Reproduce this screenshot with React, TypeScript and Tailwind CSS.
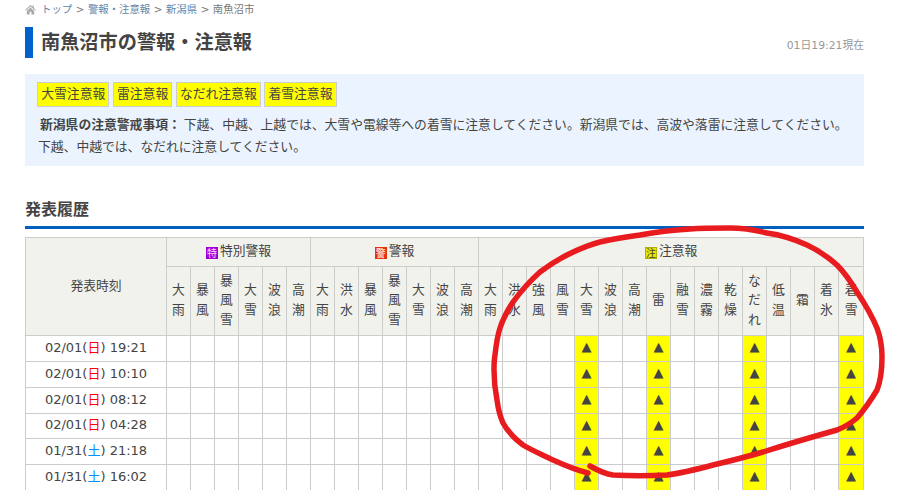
const tokubetsu = ["大雨", "暴風", "暴風雪", "大雪", "波浪", "高潮"];
const keiho = ["大雨", "洪水", "暴風", "暴風雪", "大雪", "波浪", "高潮"];
const chui = ["大雨", "洪水", "強風", "風雪", "大雪", "波浪", "高潮", "雷", "融雪", "濃霧", "乾燥", "なだれ", "低温", "霜", "着氷", "着雪"];
const heads = [...tokubetsu, ...keiho, ...chui];
const total = heads.length;
const activeCols = new Set([17, 20, 24, 28]);

const rows = [
  { date: "02/01", day: "日", time: "19:21", h: "h-[26px]" },
  { date: "02/01", day: "日", time: "10:10", h: "h-[26px]" },
  { date: "02/01", day: "日", time: "08:12", h: "h-[26px]" },
  { date: "02/01", day: "日", time: "04:28", h: "h-[25px]" },
  { date: "01/31", day: "土", time: "21:18", h: "h-[26px]" },
  { date: "01/31", day: "土", time: "16:02", h: "h-[26px]" },
];

const badges = ["大雪注意報", "雷注意報", "なだれ注意報", "着雪注意報"];

function Crumb({ children }: { children: React.ReactNode }) {
  return <span className="text-[#6486a8]">{children}</span>;
}

function Sep() {
  return <span className="mx-[3.5px] text-[#777]">&gt;</span>;
}

function Mark({ label, cls }: { label: string; cls: string }) {
  return (
    <span className={`mr-[2px] inline-flex h-[12px] w-[12px] items-center justify-center align-[-2px] font-['Noto_Sans_CJK_JP',sans-serif] text-[10px] leading-none ${cls}`}>
      {label}
    </span>
  );
}

export default function App() {
  return (
    <div className="relative h-[490px] w-[910px] overflow-hidden bg-white pl-[25px] pr-[46px] font-['DejaVu_Sans','Noto_Sans_CJK_JP',sans-serif] text-[12.8px] text-[#444]">
      <nav className="flex h-[17px] items-center pt-[1px] text-[10.4px] leading-none">
        <svg viewBox="0 0 12 11" className="mr-[5px] h-[11px] w-[11px]" fill="#aaa">
          <path d="M6 0.5 0 6l.8.8L6 2.2l5.2 4.6.8-.8L9.6 3.8V1H8.2v1.6L6 .5Z" />
          <path d="M2 7 6 3.4 10 7v4H7V8H5v3H2V7Z" />
        </svg>
        <Crumb>トップ</Crumb>
        <Sep />
        <Crumb>警報・注意報</Crumb>
        <Sep />
        <Crumb>新潟県</Crumb>
        <Sep />
        <span className="text-[#777]">南魚沼市</span>
      </nav>

      <header className="mt-[10px] flex h-[31px] items-center justify-between">
        <h1 className="border-l-[8px] border-[#0060cc] pl-[8px] text-[19.2px] leading-[31px] font-bold text-[#444]">
          南魚沼市の警報・注意報
        </h1>
        <span className="mt-[7px] text-[10.8px] text-[#999]">01日19:21現在</span>
      </header>

      <section className="mt-[16px] h-[92px] bg-[#ebf4fe] px-[12px] pt-[8px]">
        <div className="flex gap-[3.25px]">
          {badges.map((b) => (
            <span key={b} className="flex h-[25px] items-center border border-[#ccc] bg-[#ffff00] px-[3.25px] leading-none text-[#444]">
              {b}
            </span>
          ))}
        </div>
        <p className="mt-[6px] pl-[1px] leading-[22px] text-[#444] [text-indent:2px]">
          <strong className="mr-[3px] font-['Noto_Sans_CJK_JP',sans-serif] font-bold">新潟県の注意警戒事項：</strong>
          下越、中越、上越では、大雪や電線等への着雪に注意してください。新潟県では、高波や落雷に注意してください。下越、中越では、なだれに注意してください。
        </p>
      </section>

      <h2 className="mt-[33px] box-content h-[27px] border-b-[3px] border-[#0060c0] text-[16px] leading-[22px] font-bold text-[#444]">
        発表履歴
      </h2>

      <table className="mt-[8px] w-[839px] table-fixed border-collapse text-center text-[12.8px] text-[#444]">
        <colgroup>
          <col className="w-[141px]" />
          {heads.map((_, i) => (
            <col key={i} className={i === total - 1 ? "w-[25px]" : "w-[24px]"} />
          ))}
        </colgroup>
        <thead>
          <tr className="h-[29px]">
            <th rowSpan={2} className="border border-[#ccc] bg-[#f2f2ed] pb-[2px] font-normal">発表時刻</th>
            <th colSpan={6} className="border border-[#ccc] bg-[#f2f2ed] pb-[3px] font-normal">
              <Mark label="特" cls="bg-[#a000d8] text-[#ffd8ff]" />特別警報
            </th>
            <th colSpan={7} className="border border-[#ccc] bg-[#f2f2ed] pb-[3px] font-normal">
              <Mark label="警" cls="bg-[#e8300c] text-white" />警報
            </th>
            <th colSpan={16} className="border border-[#ccc] bg-[#f2f2ed] pb-[3px] font-normal">
              <Mark label="注" cls="border border-[#b0b000] bg-[#e8e800] text-[#444]" />注意報
            </th>
          </tr>
          <tr className="h-[69px]">
            {heads.map((h, i) => (
              <th key={i} className="border border-[#ccc] bg-[#f2f2ed] p-0 pb-[2px] leading-[19.6px] font-normal">
                <span className="mx-auto block w-[14px]">{h}</span>
              </th>
            ))}
          </tr>
        </thead>
        <tbody>
          {rows.map((r, ri) => (
            <tr key={ri} className={r.h}>
              <td className="border border-[#ccc] bg-white p-0 pb-[3px] text-[13px] leading-none">
                {r.date}(<span className={r.day === "日" ? "text-[#ff0000]" : "text-[#0090ff]"}>{r.day}</span>) {r.time}
              </td>
              {heads.map((_, i) => (
                <td key={i} className={`border border-[#ccc] p-0 pb-[4px] text-[13px] leading-none ${activeCols.has(i) ? "bg-[#ffff00]" : "bg-white"}`}>
                  {activeCols.has(i) ? "▲" : ""}
                </td>
              ))}
            </tr>
          ))}
        </tbody>
      </table>

      <svg className="pointer-events-none absolute top-0 left-0" width="910" height="490" viewBox="0 0 910 490" fill="none">
        <path
          d="M590 466 C597 470 605 474 613 475 C630 476 650 476 667 475 C683 473 698 469 713 465 C730 461 746 457 763 452 C788 444 812 437 837 430 C845 427 851 423 857 418 C864 410 871 400 877 390 C881 380 882 368 882 357 C882 345 880 336 877 328 C872 316 865 304 857 292 C851 282 845 273 837 265 C828 257 818 250 807 245 C794 239 781 235 767 233 C755 230 742 228 730 228 C716 228 703 228 690 229 C673 230 656 232 640 235 C626 237 613 239 600 242 C588 245 577 250 567 255 C557 260 548 266 540 272 C530 281 521 291 513 302 C507 311 503 319 500 328 C497 337 496 346 495 355 C494 360 494 365 494 370 C494 380 495 390 497 400 C498 408 500 416 503 423 C508 432 515 439 523 445 C533 451 543 455 553 460 C564 465 576 470 588 473"
          stroke="#e81c1f"
          strokeWidth="5.5"
          strokeLinecap="round"
          strokeLinejoin="round"
        />
      </svg>
    </div>
  );
}
